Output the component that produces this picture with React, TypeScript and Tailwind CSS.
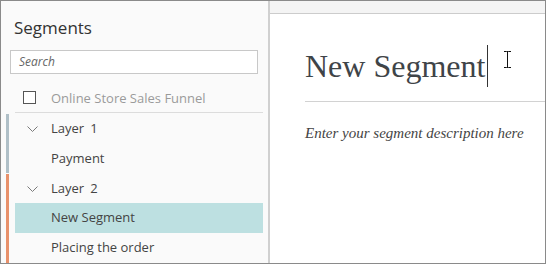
import React from "react";

const sans = { fontFamily: '"Open Sans", "Noto Sans", sans-serif' };
const serif = { fontFamily: '"Liberation Serif", "Times New Roman", serif' };

const Chevron = () => (
  <svg width="11" height="6" viewBox="0 0 11 6" className="shrink-0">
    <polyline points="0.5,0.5 5.5,5.5 10.5,0.5" fill="none" stroke="#7a7a7a" strokeWidth="1" />
  </svg>
);

const LayerRow = ({ label, num, h }: { label: string; num: string; h: string }) => (
  <div className={`flex items-center pl-[12px] text-[13px] text-[#444] ${h}`}>
    <Chevron />
    <span className="ml-[13px]">{label}</span>
    <span className="ml-[6px]">{num}</span>
  </div>
);

const SegmentRow = ({ label, h, active }: { label: string; h: string; active?: boolean }) => (
  <div
    className={`flex items-center pl-[36px] text-[13px] text-[#444] ${h} ${
      active ? "bg-[#bde0e1]" : ""
    }`}
  >
    {label}
  </div>
);

const IBeam = () => (
  <svg width="9" height="17" viewBox="0 0 9 17" className="absolute left-[233px] top-[37px]">
    <path d="M1 0.5h2.5M5.5 0.5H8M4.5 1v15M1 16.5h2.5M5.5 16.5H8" stroke="#111" strokeWidth="1" fill="none" />
    <path d="M3.5 0.5h2M3.5 16.5h2" stroke="#111" strokeWidth="1" />
  </svg>
);

export default function App() {
  return (
    <div className="w-[546px] h-[264px] border border-[#8a8a8a] flex overflow-hidden bg-white" style={sans}>
      <aside className="w-[267px] h-full bg-[#fafafa] flex flex-col">
        <h2 className="pt-[15px] pl-[13px] text-[17px] leading-[24px] text-[#333]">Segments</h2>
        <div className="mt-[10px] ml-[9px] w-[248px] h-[25px] border border-[#c8c8c8] bg-white flex items-center pl-[8px]">
          <span className="italic text-[12px] text-[#666]">Search</span>
        </div>
        <div className="ml-[14px] w-[248px] h-[40px] border-b border-[#dcdcdc] flex items-start pt-[17px]">
          <span className="ml-[8px] w-[13px] h-[13px] border border-[#555] bg-white" />
          <span className="ml-[15px] -mt-[3px] text-[13px] leading-[20px] text-[#9a9a9a]">
            Online Store Sales Funnel
          </span>
        </div>
        <div className="flex mt-[1px] pl-[5px]">
          <div className="w-[3px] bg-[#afbfc7]" />
          <div className="ml-[6px] w-[248px]">
            <LayerRow label="Layer" num="1" h="h-[30px]" />
            <SegmentRow label="Payment" h="h-[29px]" />
          </div>
        </div>
        <div className="flex flex-1 mt-[1px] pl-[5px]">
          <div className="w-[3px] bg-[#e8916b]" />
          <div className="ml-[6px] w-[248px]">
            <LayerRow label="Layer" num="2" h="h-[29px]" />
            <SegmentRow label="New Segment" h="h-[30px]" active />
            <SegmentRow label="Placing the order" h="h-[30px]" />
          </div>
        </div>
      </aside>
      <div className="w-[2px] h-full bg-[#d0d0d0]" />
      <main className="flex-1 flex flex-col">
        <div className="h-[13px] bg-[#f4f4f4] border-b border-[#cccccc]" />
        <div className="relative flex-1 bg-white">
          <div className="ml-[35px] pt-[34px] pb-[14px] border-b border-[#d2d2d2] flex items-start">
            <span className="text-[32px] leading-[36px] text-[#3f4448]" style={serif}>
              New Segment
            </span>
            <span className="ml-[2px] w-px h-[42px] -mt-[3px] bg-[#333]" />
          </div>
          <IBeam />
          <p className="ml-[35px] mt-[21px] italic text-[15px] leading-[20px] text-[#444]" style={serif}>
            Enter your segment description here
          </p>
        </div>
      </main>
    </div>
  );
}
